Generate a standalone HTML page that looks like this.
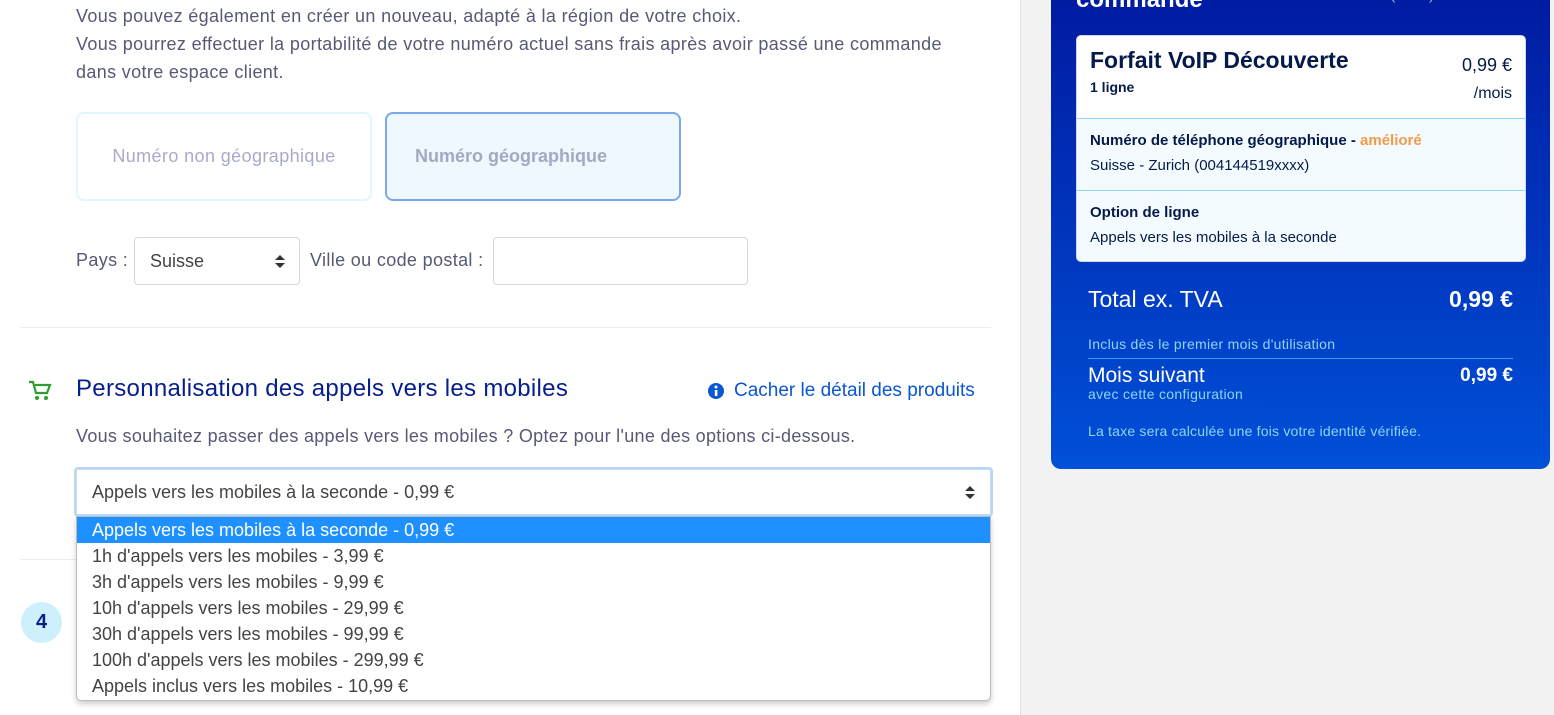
<!DOCTYPE html>
<html><head><meta charset="utf-8"><style>
*{margin:0;padding:0;box-sizing:border-box}
body{width:1554px;height:715px;overflow:hidden;background:#f2f2f2;font-family:"Liberation Sans",sans-serif;position:relative}
.a{position:absolute;white-space:nowrap}
#left{position:absolute;left:0;top:0;width:1021px;height:715px;background:#fff;border-right:1px solid #e3e3e3}
.t{color:#555a75;font-size:18px;letter-spacing:.35px}
.card{position:absolute;left:1051px;top:-20px;width:499px;height:489px;border-radius:10px;background:linear-gradient(#0019a0,#0050d8)}
.w{color:#fff}
.opt{position:absolute;left:1px;width:912px;height:26px;padding-left:14px;font-size:18px;line-height:26px;color:#444}
</style></head><body>
<div id="left">
<div class="a t" style="left:76px;top:6px">Vous pouvez également en créer un nouveau, adapté à la région de votre choix.</div>
<div class="a t" style="left:76px;top:34px">Vous pourrez effectuer la portabilité de votre numéro actuel sans frais après avoir passé une commande</div>
<div class="a t" style="left:76px;top:62px">dans votre espace client.</div>
<div class="a" style="left:76px;top:112px;width:296px;height:89px;border:2px solid #def6ff;border-radius:8px;color:#a6abcb;font-size:18px;letter-spacing:.4px;text-align:center;line-height:85px">Numéro non géographique</div>
<div class="a" style="left:385px;top:112px;width:296px;height:89px;border:2px solid #7ba7ec;border-radius:8px;background:#edf9fe;color:#a4a9c2;font-size:18px;font-weight:bold;line-height:85px;padding-left:28px">Numéro géographique</div>
<div class="a t" style="left:76px;top:250px">Pays :</div>
<div class="a" style="left:134px;top:237px;width:166px;height:48px;border:1px solid #d5d7de;border-radius:4px;color:#444;font-size:18px;line-height:46px;padding-left:15px">Suisse<svg style="position:absolute;right:14px;top:17px" width="10" height="13"><path d="M5 0L10 5H0Z M5 13L0 8H10Z" fill="#333"/></svg></div>
<div class="a t" style="left:310px;top:250px">Ville ou code postal :</div>
<div class="a" style="left:493px;top:237px;width:255px;height:48px;border:1px solid #d5d7de;border-radius:4px"></div>
<div class="a" style="left:20px;top:327px;width:971px;border-top:1px solid #ececec"></div>
<svg class="a" style="left:28px;top:380px" width="24" height="22" viewBox="0 0 24 22"><path d="M1 2h4l3 11h11l3-8H7" fill="none" stroke="#2e9e2e" stroke-width="2.2"/><circle cx="9" cy="18" r="2" fill="#2e9e2e"/><circle cx="18" cy="18" r="2" fill="#2e9e2e"/></svg>
<div class="a" style="left:76px;top:375px;color:#061e8e;font-size:24px;letter-spacing:.3px">Personnalisation des appels vers les mobiles</div>
<svg class="a" style="left:707px;top:382px" width="18" height="18"><circle cx="9" cy="9" r="8" fill="#0a57d2"/><rect x="7.8" y="8" width="2.6" height="6" fill="#fff"/><circle cx="9" cy="5" r="1.5" fill="#fff"/></svg>
<div class="a" style="left:734px;top:380px;color:#0a57d2;font-size:19px">Cacher le détail des produits</div>
<div class="a t" style="left:76px;top:426px;letter-spacing:.3px">Vous souhaitez passer des appels vers les mobiles ? Optez pour l'une des options ci-dessous.</div>
<div class="a" style="left:20px;top:559px;width:971px;border-top:1px solid #ececec"></div>
<div class="a" style="left:21px;top:602px;width:41px;height:41px;border-radius:50%;background:#cdf0fc;color:#061e8e;font-size:20px;font-weight:bold;text-align:center;line-height:41px">4</div>
<div class="a" style="left:74px;top:467px;width:919px;height:50px;border:2px solid #b9d6f8;border-radius:4px;background:#fff;color:#444;font-size:18px;line-height:46px;padding-left:16px;box-shadow:inset 0 0 0 1px #c7dcf5">Appels vers les mobiles à la seconde - 0,99 €<svg style="position:absolute;right:16px;top:17px" width="10" height="13"><path d="M5 0L10 5H0Z M5 13L0 8H10Z" fill="#333"/></svg></div>
<div class="a" style="left:76px;top:516px;width:915px;height:185px;background:#fff;border:1px solid #bbb;border-radius:0 0 5px 5px;box-shadow:0 3px 6px rgba(0,0,0,.2)">
<div class="opt" style="top:0;left:0;width:913px;background:#1e90ff;color:#fff;padding-left:15px">Appels vers les mobiles à la seconde - 0,99 €</div>
<div class="opt" style="top:26px">1h d'appels vers les mobiles - 3,99 €</div>
<div class="opt" style="top:52px">3h d'appels vers les mobiles - 9,99 €</div>
<div class="opt" style="top:78px">10h d'appels vers les mobiles - 29,99 €</div>
<div class="opt" style="top:104px">30h d'appels vers les mobiles - 99,99 €</div>
<div class="opt" style="top:130px">100h d'appels vers les mobiles - 299,99 €</div>
<div class="opt" style="top:156px">Appels inclus vers les mobiles - 10,99 €</div>
</div>
</div>
<div class="card"></div>
<div class="a w" style="left:1076px;top:-14px;font-size:24px;font-weight:bold">commande</div>
<div class="a" style="left:1390px;top:-14px;color:#9ab;font-size:16px">(EUR)</div>
<div class="a" style="left:1076px;top:35px;width:450px;height:227px;background:#f3fbfe;border:1px solid #cfd8e3;border-radius:5px;overflow:hidden">
<div style="position:absolute;left:0;top:0;width:450px;height:83px;background:#fff;border-bottom:1px solid #8fd4f3"></div>
<div class="a" style="left:13px;top:11px;color:#061a4a;font-size:23px;font-weight:bold">Forfait VoIP Découverte</div>
<div class="a" style="left:13px;top:43px;color:#061a4a;font-size:14px;font-weight:bold">1 ligne</div>
<div class="a" style="right:13px;top:19px;color:#061a4a;font-size:18px">0,99 €</div>
<div class="a" style="right:13px;top:49px;color:#061a4a;font-size:16px">/mois</div>
<div class="a" style="left:13px;top:96px;color:#061a4a;font-size:15px;font-weight:bold">Numéro de téléphone géographique - <span style="color:#f39a4a">amélioré</span></div>
<div class="a" style="left:13px;top:121px;color:#061a4a;font-size:15px">Suisse - Zurich (004144519xxxx)</div>
<div style="position:absolute;left:0;top:154px;width:450px;border-top:1px solid #8fd4f3"></div>
<div class="a" style="left:13px;top:168px;color:#061a4a;font-size:15px;font-weight:bold">Option de ligne</div>
<div class="a" style="left:13px;top:193px;color:#061a4a;font-size:15px">Appels vers les mobiles à la seconde</div>
</div>
<div class="a w" style="left:1088px;top:286px;font-size:23px">Total ex. TVA</div>
<div class="a w" style="right:41px;top:286px;font-size:23px;font-weight:bold">0,99 €</div>
<div class="a" style="left:1088px;top:336px;color:#8fd4f3;font-size:14px;letter-spacing:.3px">Inclus dès le premier mois d'utilisation</div>
<div class="a" style="left:1088px;top:358px;width:425px;border-top:1px solid #3a9be8"></div>
<div class="a w" style="left:1088px;top:364px;font-size:21px">Mois suivant</div>
<div class="a w" style="right:41px;top:365px;font-size:19px;font-weight:bold">0,99 €</div>
<div class="a" style="left:1088px;top:386px;color:#8fd4f3;font-size:14px;letter-spacing:.3px">avec cette configuration</div>
<div class="a" style="left:1088px;top:423px;color:#8fd4f3;font-size:14px;letter-spacing:.2px">La taxe sera calculée une fois votre identité vérifiée.</div>
</body></html>
